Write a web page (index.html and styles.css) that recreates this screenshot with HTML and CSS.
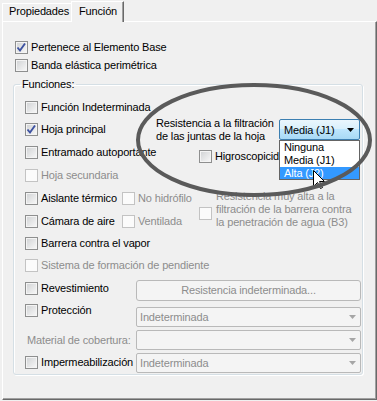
FILE: index.html
```html
<!DOCTYPE html>
<html lang="es">
<head>
    <meta charset="UTF-8">
    <meta name="viewport" content="width=device-width, initial-scale=1.0">
    <title>Función</title>
    <link rel="stylesheet" href="styles.css">
</head>
<body>
    <div class="window">
        <div class="tabs">
            <div class="tab">Propiedades</div>
            <div class="tab active">Función</div>
        </div>

        <div class="panel">
            <div class="top-row">
                <span class="check"><span class="box"><svg class="tick" viewBox="0 0 11 11"><path d="M1.5 5.5 L4 8.5 L9 1.5"/></svg></span>Pertenece al Elemento Base</span>
            </div>
            <div class="top-row">
                <span class="check"><span class="box"></span>Banda elástica perimétrica</span>
            </div>

            <fieldset class="group">
                <legend>Funciones:</legend>

                <div class="row h22">
                    <span class="check"><span class="box"></span>Función Indeterminada</span>
                </div>

                <div class="row h23">
                    <div class="cell w131">
                        <span class="check"><span class="box"><svg class="tick" viewBox="0 0 11 11"><path d="M1.5 5.5 L4 8.5 L9 1.5"/></svg></span>Hoja principal</span>
                    </div>
                    <div class="res-label">Resistencia a la filtración<br>de las juntas de la hoja</div>
                    <div class="combo-wrap">
                        <div class="combo hot">
                            <span>Media (J1)</span>
                            <svg class="arrow" viewBox="0 0 7 4"><polygon points="0,0 7,0 3.5,4"/></svg>
                        </div>
                        <ul class="dropdown">
                            <li>Ninguna</li>
                            <li>Media (J1)</li>
                            <li class="selected">Alta (J2)</li>
                        </ul>
                        <svg class="cursor" viewBox="0 0 12 20"><path d="M0.5 0.5 L0.5 16.5 L4.5 12.5 L7.5 18.5 L9.5 17.5 L6.5 11.5 L11.5 11.5 Z"/></svg>
                    </div>
                </div>

                <div class="row h23">
                    <div class="cell w174">
                        <span class="check"><span class="box"></span>Entramado autoportante</span>
                    </div>
                    <span class="check higro"><span class="box"></span>Higroscopicidad</span>
                </div>

                <div class="row h23">
                    <span class="check disabled"><span class="box"></span>Hoja secundaria</span>
                </div>

                <div class="row h23">
                    <div class="cell w97">
                        <span class="check"><span class="box"></span>Aislante térmico</span>
                    </div>
                    <div class="cell w77">
                        <span class="check disabled"><span class="box"></span>No hidrófilo</span>
                    </div>
                    <div class="check disabled b3">
                        <span class="box"></span>
                        <span>Resistencia muy alta a la<br>filtración de la barrera contra<br>la penetración de agua (B3)</span>
                    </div>
                </div>

                <div class="row h22">
                    <div class="cell w97">
                        <span class="check"><span class="box"></span>Cámara de aire</span>
                    </div>
                    <span class="check disabled"><span class="box"></span>Ventilada</span>
                </div>

                <div class="row h22">
                    <span class="check"><span class="box"></span>Barrera contra el vapor</span>
                </div>

                <div class="row h23">
                    <span class="check disabled"><span class="box"></span>Sistema de formación de pendiente</span>
                </div>

                <div class="row h26">
                    <div class="cell w111 top5">
                        <span class="check"><span class="box"></span>Revestimiento</span>
                    </div>
                    <div class="button">Resistencia indeterminada...</div>
                </div>

                <div class="row h25 start">
                    <div class="cell w111 top1">
                        <span class="check"><span class="box"></span>Protección</span>
                    </div>
                    <div class="combo top4">
                        <span>Indeterminada</span>
                        <svg class="arrow" viewBox="0 0 7 4"><polygon points="0,0 7,0 3.5,4"/></svg>
                    </div>
                </div>

                <div class="row h23">
                    <div class="cell w111">
                        <span class="field-label">Material de cobertura:</span>
                    </div>
                    <div class="combo">
                        <span></span>
                        <svg class="arrow" viewBox="0 0 7 4"><polygon points="0,0 7,0 3.5,4"/></svg>
                    </div>
                </div>

                <div class="row h23">
                    <div class="cell w111">
                        <span class="check"><span class="box"></span>Impermeabilización</span>
                    </div>
                    <div class="combo">
                        <span>Indeterminada</span>
                        <svg class="arrow" viewBox="0 0 7 4"><polygon points="0,0 7,0 3.5,4"/></svg>
                    </div>
                </div>
            </fieldset>
        </div>

        <!-- hand drawn highlight over the dialog -->
        <svg class="annotation" viewBox="0 0 377 401">
            <ellipse cx="254" cy="140" rx="116" ry="55"/>
        </svg>
    </div>
</body>
</html>
```

FILE: styles.css
```css
* {
    box-sizing: border-box;
}

body {
    margin: 0;
    background-color: #f0f0f0;
    font-family: 'Liberation Sans', Arial, sans-serif;
    font-size: 11px;
    letter-spacing: -0.15px;
    color: #000;
}

.window {
    position: relative;
    width: 377px;
    height: 401px;
    padding-left: 2px;
    overflow: hidden;
}

/* tabs */

.tabs {
    display: flex;
    align-items: flex-end;
    height: 21px;
}

.tab {
    width: 69px;
    height: 18px;
    padding-left: 6px;
    line-height: 14px;
    border-top: 1px solid #fff;
    border-left: 1px solid #fff;
}

.tab.active {
    position: relative;
    z-index: 1;
    width: 53px;
    height: 21px;
    margin-bottom: -1px;
    padding-left: 7px;
    line-height: 18px;
    background-color: #f0f0f0;
    border-right: 1px solid #696969;
    box-shadow: inset -1px 0 #a0a0a0;
}

/* panel */

.panel {
    height: 379px;
    padding: 16px 0 0 12px;
    border-top: 1px solid #fff;
    border-left: 1px solid #fff;
    border-right: 1px solid #696969;
    border-bottom: 1px solid #696969;
    box-shadow: inset -1px -1px #a0a0a0;
}

.top-row {
    display: flex;
    align-items: center;
    height: 18px;
}

/* checkboxes */

.check {
    display: flex;
    align-items: center;
    gap: 3px;
    line-height: 13px;
    white-space: nowrap;
}

.box {
    flex: none;
    width: 13px;
    height: 13px;
    border: 1px solid #8e8f8f;
    background: linear-gradient(135deg, #cfd1d3, #f9f9f9);
    box-shadow: inset 0 0 0 1px #f4f4f4;
}

.tick {
    display: block;
    width: 11px;
    height: 11px;
}

.tick path {
    fill: none;
    stroke: #3d52a1;
    stroke-width: 1.9;
}

.check.disabled {
    color: #8d8d8d;
}

.check.disabled .box {
    border-color: #c3c3c3;
    background: #fbfbfb;
    box-shadow: none;
}

/* group box */

.group {
    width: 350px;
    min-width: 0;
    margin: 4px 0 0 -2px;
    padding: 5px 0 0 11px;
    border: 1px solid #d5dfe5;
    border-radius: 3px;
    box-shadow: inset 1px 1px #fff, 1px 1px #fff;
}

.group legend {
    margin-left: -5px;
    padding: 0 2px;
    line-height: 13px;
}

.row {
    display: flex;
    align-items: center;
}

.row.start {
    align-items: flex-start;
}

.h22 { height: 22px; }
.h23 { height: 23px; }
.h25 { height: 25px; }
.h26 { height: 26px; }

.cell {
    flex: none;
}

.w77 { width: 77px; }
.w97 { width: 97px; }
.w111 { width: 111px; }
.w131 { width: 131px; }
.w174 { width: 174px; }

.top1 { align-self: flex-start; margin-top: 1px; }
.top4 { align-self: flex-start; margin-top: 4px; }
.top5 { align-self: flex-start; margin-top: 5px; }

.res-label {
    width: 123px;
    line-height: 13px;
}

.higro {
    align-self: flex-start;
    margin-top: 9px;
}

.b3 {
    align-self: flex-start;
    align-items: flex-start;
    gap: 4px;
    margin-top: 3px;
}

.b3 .box {
    margin-top: 17px;
}

.field-label {
    padding-left: 2px;
    color: #8d8d8d;
}

/* combos and button */

.combo-wrap {
    position: relative;
    width: 81px;
}

.combo {
    display: flex;
    align-items: center;
    justify-content: space-between;
    width: 225px;
    height: 20px;
    padding: 0 4px 0 3px;
    border: 1px solid #b9b9b9;
    border-radius: 2px;
    background-color: #f4f4f4;
    color: #8d8d8d;
}

.arrow {
    width: 7px;
    height: 4px;
    fill: #a6a6a6;
}

.combo.hot {
    width: 81px;
    height: 21px;
    padding: 0 5px 0 4px;
    border-color: #3c7fb1;
    color: #000;
    background: linear-gradient(#eaf6fd 0%, #d9f0fc 45%, #bee6fd 50%, #a7d9f5 100%);
}

.combo.hot .arrow {
    fill: #000;
}

.dropdown {
    position: absolute;
    z-index: 3;
    top: 21px;
    left: 0;
    width: 81px;
    margin: 0;
    padding: 0;
    list-style: none;
    background-color: #fff;
    border: 1px solid #646464;
}

.dropdown li {
    height: 13px;
    padding-left: 4px;
    line-height: 13px;
}

.dropdown li:last-child {
    height: 12px;
}

.dropdown li.selected {
    background-color: #3399ff;
    color: #fff;
}

.cursor {
    position: absolute;
    z-index: 4;
    top: 51px;
    left: 34px;
    width: 12px;
    height: 20px;
    fill: #fff;
    stroke: #000;
    stroke-width: 1;
}

.button {
    width: 225px;
    height: 21px;
    line-height: 19px;
    text-align: center;
    border: 1px solid #b9b9b9;
    border-radius: 3px;
    background-color: #f4f4f4;
    color: #8d8d8d;
}

/* annotation */

.annotation {
    position: absolute;
    z-index: 5;
    top: 0;
    left: 0;
    width: 377px;
    height: 401px;
    pointer-events: none;
}

.annotation ellipse {
    fill: none;
    stroke: #5a5a5a;
    stroke-width: 4;
}
```
